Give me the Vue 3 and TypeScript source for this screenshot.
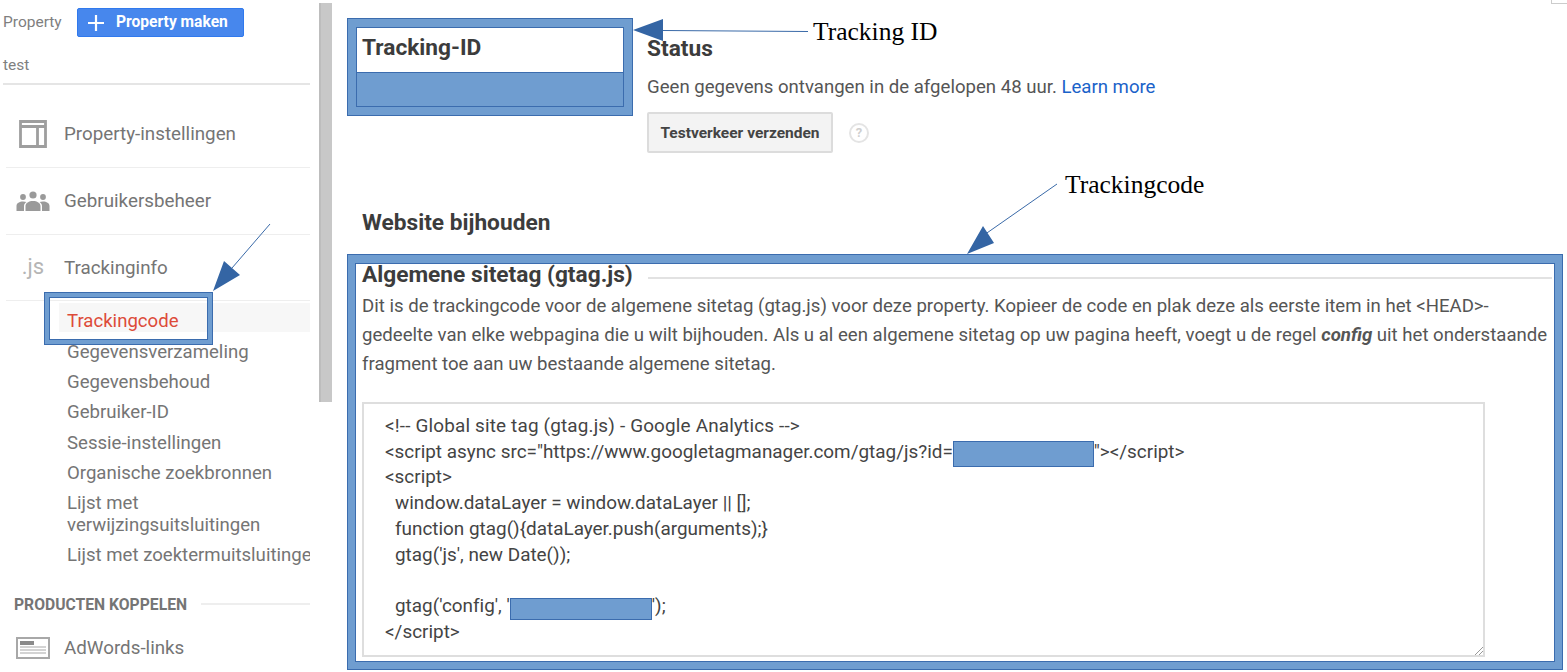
<script setup lang="ts">
const subItems: string[] = [
  'Gegevensverzameling',
  'Gegevensbehoud',
  'Gebruiker-ID',
  'Sessie-instellingen',
  'Organische zoekbronnen',
]
</script>

<template>
  <div class="page">
    <aside class="sidebar">
      <div class="prop-row">
        <span class="prop-label">Property</span>
        <button class="make-btn">
          <svg class="plus" viewBox="0 0 18 18" width="18" height="18"><path d="M9 1v16M1 9h16" stroke="#fff" stroke-width="2.200" fill="none" /></svg>
          <span class="make-text">Property maken</span>
        </button>
      </div>
      <div class="test">test</div>

      <div class="nav-row first">
        <span class="nav-icon">
          <svg viewBox="0 0 28 28" width="28" height="28"><path d="M1.500 1.500h25v25h-25zM1.500 6.500h25M18.500 6.500v20" fill="none" stroke="#9e9e9e" stroke-width="2.800" /></svg>
        </span>
        <span>Property-instellingen</span>
      </div>
      <div class="nav-row">
        <span class="nav-icon">
          <svg viewBox="0 0 34 21" width="34" height="21" fill="#9a9a9a">
            <circle cx="17" cy="4" r="3.600" /><circle cx="7" cy="6" r="2.900" /><circle cx="27" cy="6" r="2.900" />
            <path d="M0.500 20v-5c0-3 3-4.500 6.500-4.500 1.500 0 2.500.2 3.500.6-1.500 1-2.500 2.300-2.500 3.900v5zM33.500 20v-5c0-3-3-4.500-6.500-4.500-1.500 0-2.500.2-3.500.6 1.500 1 2.500 2.300 2.500 3.900v5zM9.500 20v-5c0-3 3.500-5 7.500-5s7.500 2 7.500 5v5z" />
          </svg>
        </span>
        <span>Gebruikersbeheer</span>
      </div>
      <div class="nav-row third">
        <span class="nav-icon js">.js</span>
        <span>Trackinginfo</span>
      </div>

      <div class="sub active"><span>Trackingcode</span></div>
      <div class="sub" v-for="item in subItems" :key="item">{{ item }}</div>
      <div class="sub double">Lijst met<br />verwijzingsuitsluitingen</div>
      <div class="sub clip">Lijst met zoektermuitsluitingen</div>

      <div class="section">
        <span>PRODUCTEN KOPPELEN</span>
        <i></i>
      </div>
      <div class="nav-row last">
        <span class="nav-icon">
          <svg viewBox="0 0 34 22" width="34" height="22">
            <rect x="1" y="1" width="32" height="20" fill="#fff" stroke="#a8a8a8" stroke-width="2" />
            <rect x="4" y="4" width="14" height="4" fill="#8a8a8a" />
            <path d="M4 10h26M4 13h26M4 16h26" stroke="#a8a8a8" stroke-width="1.200" />
          </svg>
        </span>
        <span>AdWords-links</span>
      </div>
    </aside>

    <div class="scroll-track"><div class="scroll-thumb"></div></div>

    <main class="main">
      <div class="top">
        <div class="id-box">
          <div class="id-inner">
            <h2>Tracking-ID</h2>
            <div class="id-redact"></div>
          </div>
        </div>
        <div class="status">
          <h2>Status</h2>
          <p class="status-text">Geen gegevens ontvangen in de afgelopen 48 uur. <a>Learn more</a></p>
          <div class="status-actions">
            <button class="test-btn">Testverkeer verzenden</button>
            <span class="help">?</span>
          </div>
        </div>
      </div>

      <h2 class="site-title">Website bijhouden</h2>

      <section class="code-box">
        <div class="code-inner">
          <div class="code-head">
            <h2>Algemene sitetag (gtag.js)</h2>
            <i></i>
          </div>
          <p class="desc">Dit is de trackingcode voor de algemene sitetag (gtag.js) voor deze property. Kopieer de code en plak deze als eerste item in het &lt;HEAD&gt;-<br />gedeelte van elke webpagina die u wilt bijhouden. Als u al een algemene sitetag op uw pagina heeft, voegt u de regel <b><em>config</em></b> uit het onderstaande<br />fragment toe aan uw bestaande algemene sitetag.</p>
          <div class="code">
            <div class="spaced">&lt;!-- Global site tag (gtag.js) - Google Analytics --&gt;</div>
            <div>&lt;script async src="https://www.googletagmanager.com/gtag/js?id=<span class="redact wide"></span>"&gt;&lt;/script&gt;</div>
            <div>&lt;script&gt;</div>
            <div class="ind">window.dataLayer = window.dataLayer || [];</div>
            <div class="ind">function gtag(){dataLayer.push(arguments);}</div>
            <div class="ind">gtag('js', new Date());</div>
            <div class="blank"></div>
            <div class="ind">gtag('config', '<span class="redact"></span>');</div>
            <div>&lt;/script&gt;</div>
            <svg class="grip" viewBox="0 0 8 8" width="8" height="8"><path d="M0 8L8 0M4 8L8 4" stroke="#999" stroke-width="1" /></svg>
          </div>
        </div>
      </section>
    </main>

    <div class="corner"></div>
    <div class="mark-box"></div>
    <span class="note note-id">Tracking ID</span>
    <span class="note note-code">Trackingcode</span>
    <svg class="arrows" viewBox="0 0 1567 672" width="1567" height="672">
      <path d="M663 30.500L808 31.500M984 235L1057 184M232 268L270 224" stroke="#3a6aa8" stroke-width="1" fill="none" />
      <path d="M633 30L663 19V41zM967 254L983 226L994 243zM213 291L224 261L240 275z" fill="#3465a4" />
    </svg>
  </div>
</template>

<style>
html, body { margin: 0; background: #fff; }
</style>

<style scoped>
.page {
  position: relative;
  display: flex;
  width: 1567px;
  height: 672px;
  overflow: hidden;
  background: #fff;
  font-family: Roboto, "Liberation Sans", sans-serif;
  color: #757575;
}
h2, p { margin: 0; }

.sidebar { width: 310px; flex: none; padding-left: 3px; box-sizing: border-box; font-size: 18.800px; }
.prop-row { display: flex; align-items: center; height: 29px; margin-top: 8px; font-size: 15.500px; color: #7f7f7f; }
.prop-label { width: 74px; padding-bottom: 1px; }
.make-btn {
  display: flex; align-items: center; width: 167px; height: 29px; padding: 0 0 0 9px; box-sizing: border-box;
  border: 1px solid #3079ed; border-radius: 2px; background: #4787ed; color: #fff;
  font: 700 15.600px Roboto, sans-serif;
}
.make-text { padding-bottom: 2px; }
.plus { margin-right: 11px; }
.test { height: 46px; line-height: 56px; font-size: 15.500px; color: #7f7f7f; border-bottom: 2px solid #e5e5e5; }
.nav-row {
  display: flex; align-items: center; gap: 14px; height: 66px; margin-left: 3px; padding-left: 10px;
  border-bottom: 1px solid #eee; color: #757575;
}
.nav-row.first { padding-top: 16px; }
.nav-row.third { height: 65px; }
.nav-row.last { border: 0; height: 44px; margin-top: 10px; }
.nav-icon { display: flex; width: 34px; flex: none; justify-content: center; }
.js { font-size: 22px; color: #b5b5b5; line-height: 1; padding-bottom: 2px; box-sizing: border-box; }

.sub { margin-left: 64px; font-size: 18.600px; line-height: 22px; padding: 4px 0 4.400px; color: #757575; }
.sub.active { margin-left: 56px; margin-top: 2px; height: 29px; padding: 0 0 0 8px; box-sizing: border-box; background: #f7f7f7; line-height: 36px; color: #dd4b39; margin-bottom: 4.600px; }
.double { padding-top: 3.400px; padding-bottom: 4px; }
.clip { white-space: nowrap; overflow: hidden; }
.section { display: flex; align-items: center; margin: 22px 0 0 11px; height: 24px; font-size: 15.700px; font-weight: 700; color: #757575; }
.section i { flex: 1; height: 2px; margin-left: 14px; background: #eee; }

.scroll-track { width: 13px; flex: none; margin: 3px 0 0 9px; }
.scroll-thumb { width: 13px; height: 399px; background: #c8c8c8; border-left: 2px solid #bdbdbd; box-sizing: border-box; }

.main { width: 1216px; flex: none; margin-left: 15px; padding-top: 18px; color: #555; }
.main h2 { font-size: 22.700px; font-weight: 700; color: #3c3c3c; line-height: 26px; }
.top { display: flex; height: 183px; }
.id-box {
  width: 286px; height: 98px; flex: none; box-sizing: border-box; padding: 8px;
  background: #6f9dd0; border: 1px solid #3b6cae;
}
.id-inner { height: 100%; background: #fff; border: 1px solid #3b6cae; box-sizing: border-box; display: flex; flex-direction: column; }
.id-inner h2 { height: 44px; padding: 7px 0 0 5px; box-sizing: border-box; }
.id-redact { flex: 1; background: #6f9dd0; border-top: 1px solid #3b6cae; }
.status { margin-left: 14px; padding-top: 18px; }
.status-text { font-size: 18.600px; line-height: 26px; margin-top: 12px; color: #555; white-space: nowrap; }
.status-text a { color: #1a62c9; }
.status-actions { display: flex; align-items: center; margin-top: 12px; }
.test-btn {
  width: 186px; height: 41px; background: #f3f3f3; border: 2px solid #dcdcdc; border-radius: 2px;
  font: 700 15.500px Roboto, sans-serif; color: #444; padding: 0;
}
.help {
  width: 16px; height: 16px; margin-left: 16px; border: 2px solid #e4e4e4; border-radius: 50%;
  font-size: 13px; font-weight: 700; color: #cfcfcf; text-align: center; line-height: 16px;
}
.site-title { margin: 9px 0 0 15px; }

.code-box {
  margin-top: 18px; width: 1216px; height: 416px; box-sizing: border-box; padding: 8px 7px 7px;
  background: #6f9dd0; border: 1px solid #3b6cae;
}
.code-inner { height: 100%; background: #fff; border: 1px solid #3b6cae; box-sizing: border-box; padding-left: 6px; }
.code-head { display: flex; align-items: center; height: 22px; }
.code-head h2 { white-space: nowrap; }
.code-head i { flex: 1; height: 2px; margin: 6px 2px 0 15px; background: #e2e2e2; }
.desc { font-size: 18.600px; line-height: 29px; margin-top: 6px; white-space: nowrap; color: #555; }
.code {
  position: relative; margin-top: 23px; width: 1123px; height: 255px; box-sizing: border-box;
  border: 2px solid #dedede; padding: 9px 0 0 21px; font-size: 18.900px; line-height: 25.700px; color: #444; white-space: nowrap;
  font-variant-ligatures: none;
}
.spaced { letter-spacing: 0.170px; }
.ind { padding-left: 10px; }
.blank { height: 25.700px; }
.redact {
  display: inline-block; width: 142px; height: 22px; margin: -2px 0; vertical-align: -6px; box-sizing: border-box;
  background: #6f9dd0; border: 1px solid #3b6cae;
}
.redact.wide { width: 141px; height: 26px; margin: -3px 0; }
.grip { position: absolute; right: 0; bottom: 0; }

.corner { position: absolute; left: 1551px; top: 0; width: 16px; height: 3px; border-left: 1px solid #ccc; border-bottom: 1px solid #ccc; }
.mark-box {
  position: absolute; left: 44px; top: 292px; width: 169px; height: 53px; box-sizing: border-box;
  border: 5px solid #6f9dd0; outline: 1px solid #3b6cae; outline-offset: -1px; box-shadow: inset 0 0 0 1px #3b6cae;
}
.note { position: absolute; font-family: "Liberation Serif", serif; font-size: 25.500px; line-height: 30px; color: #000; white-space: nowrap; }
.note-id { left: 813px; top: 17px; }
.note-code { left: 1065px; top: 170px; }
.arrows { position: absolute; left: 0; top: 0; pointer-events: none; }
</style>
